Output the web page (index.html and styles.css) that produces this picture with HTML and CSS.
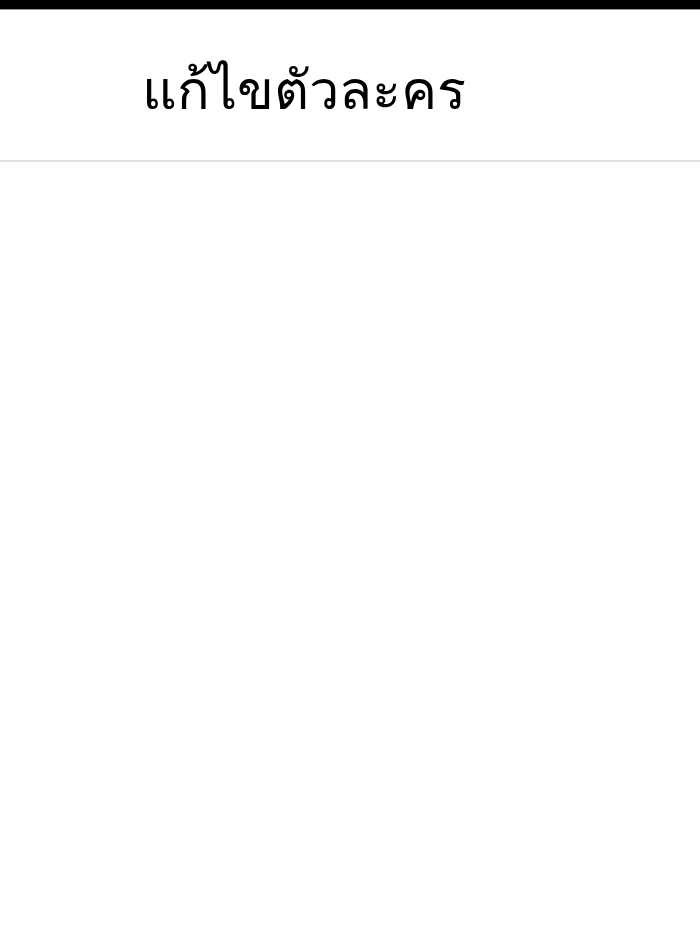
FILE: index.html
```html
<!DOCTYPE html>
<html lang="th">
<head>
  <meta charset="UTF-8">
  <title>แก้ไขตัวละคร</title>
  <meta name="viewport" content="width=device-width, initial-scale=1.0">
  <link rel="stylesheet" href="styles.css">
</head>
<body>
  <div class="status-bar"></div>
  <div class="title-bar">
    <h1 class="title">แก้ไขตัวละคร</h1>
  </div>
  <div class="content"></div>
</body>
</html>
```

FILE: styles.css
```css
html, body {
  margin: 0; padding: 0;
  background: #fff;
  font-family: 'Noto Sans', 'DejaVu Sans', sans-serif;
}
.status-bar {
  height: 9px;
  background: #000;
  border-bottom: 1px solid #999;
}
.title-bar {
  height: 152px;
  border-bottom: 2px solid #e2e2e2;
  box-sizing: border-box;
  display: flex;
  align-items: center;
  padding: 10px 0 0 142px;
}
.title {
  margin: 0;
  font-size: 54px;
  font-weight: 400;
  color: #000;
}
.content {
  height: 770px;
}
```
